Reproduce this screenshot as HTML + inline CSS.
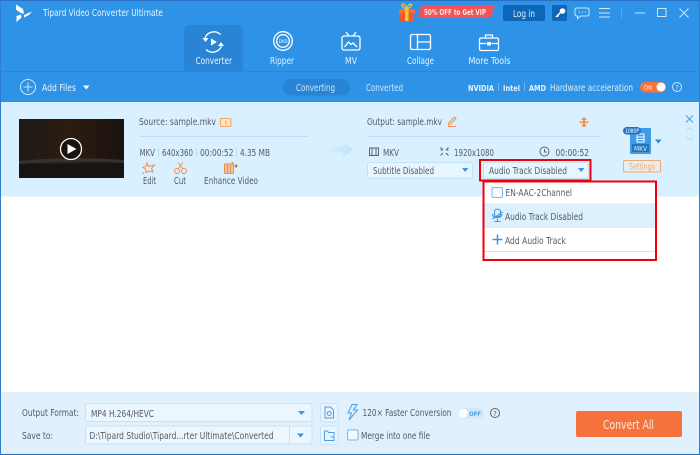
<!DOCTYPE html>
<html><head><meta charset="utf-8"><style>
html,body{margin:0;padding:0;background:#fff;width:700px;height:455px;overflow:hidden}
svg{display:block}
text{font-family:"DejaVu Sans","Liberation Sans",sans-serif;font-size:9.6px;fill:#555b66}
.w{fill:#e6f3fd}
.b{font-weight:bold}
.ln{fill:none;stroke:#fff;stroke-width:1.3}
.o{fill:none;stroke:#f58f4a;stroke-width:1}
.d{fill:none;stroke:#5a6470;stroke-width:1}
.bl{fill:none;stroke:#4a9fe6;stroke-width:1}
</style></head><body>
<svg width="700" height="455" viewBox="0 0 700 455" xmlns="http://www.w3.org/2000/svg">
<rect width="700" height="455" fill="#fff"/>
<rect width="700" height="102" fill="#2e93e6"/>
<rect width="700" height="1" fill="#2a6fc4"/>
<rect y="71" width="700" height="1.4" fill="#2a86d8"/>
<path d="M184 71V31a6 6 0 0 1 6-6h47a6 6 0 0 1 6 6v40z" fill="#2a84d6"/>
<!-- logo -->
<path d="M16 4.500l7 4.500 1 5-4-1.500-4-3zM24 15l8-3.500-3 3.500-5 2.500zM21 14.500l.5 3-5 4.500v-6z" fill="#fff"/>
<text class="w" x="43" y="16" textLength="120" lengthAdjust="spacingAndGlyphs">Tipard Video Converter Ultimate</text>
<!-- nav icons -->
<g class="ln">
<path d="M205 38a9.500 9.500 0 0 1 15.500-3.500M221.500 46a9.500 9.500 0 0 1-15.500 3.500"/>
<circle cx="283" cy="41" r="9.300"/><circle cx="283" cy="41" r="6.300"/>
<rect x="342" y="36" width="18" height="14" rx="2"/>
<path d="M346 32l3 4M356 32l-3 4M344.500 47l4-5 2.500 2.500 2-1.500 4 4"/>
<rect x="410.500" y="34.500" width="20" height="15" rx="1.500"/>
<path d="M417.500 34.500v15M417.500 42h13"/>
<rect x="479.500" y="38" width="19" height="12.500" rx="1.500"/>
<path d="M485.500 38v-3h7v3M479.500 43.500h7M491.500 43.500h7"/>
</g>
<path d="M202.500 38h6l-3 4zM224 46h-6l3-4z" fill="#fff"/>
<path d="M211 38.500l6 3.500-6 3.500z" fill="#fff"/>
<rect x="487" y="42" width="4" height="3.500" fill="#fff"/>
<text x="283" y="43" text-anchor="middle" style="font-size:4px;fill:#fff">DVD</text>
<text class="w" x="195.500" y="64" textLength="36.500" lengthAdjust="spacingAndGlyphs">Converter</text>
<text class="w" x="270" y="64" textLength="24" lengthAdjust="spacingAndGlyphs">Ripper</text>
<text class="w" x="345" y="64" textLength="12" lengthAdjust="spacingAndGlyphs">MV</text>
<text class="w" x="407" y="64" textLength="27" lengthAdjust="spacingAndGlyphs">Collage</text>
<text class="w" x="468.500" y="64" textLength="42" lengthAdjust="spacingAndGlyphs">More Tools</text>
<!-- top right -->
<rect x="400" y="10" width="14" height="11" fill="#ee5a2e"/>
<rect x="399" y="9" width="16" height="4" fill="#f4703a"/>
<rect x="405" y="9" width="3.500" height="12" fill="#f9c433"/>
<path d="M406.500 9c-4-1-6-5-3.500-5 2 0 3 3 3.500 5 .5-2 2-5 4.500-5 2 0-.5 4-4.500 5z" fill="none" stroke="#f9c433" stroke-width="1.200"/>
<path d="M421 5.500h74l-4 12.500h-73z" fill="#f2535a"/>
<text class="b" x="424" y="15" textLength="62" lengthAdjust="spacingAndGlyphs" style="font-size:8px;fill:#ffe3d5">50% OFF to Get VIP</text>
<rect x="503" y="5" width="42" height="16" rx="2" fill="#0e66b8"/>
<text class="w" x="513" y="17" textLength="22" lengthAdjust="spacingAndGlyphs" style="font-size:10px">Log in</text>
<rect x="552" y="5" width="15" height="16" rx="2" fill="#0e66b8"/>
<circle cx="562.500" cy="11" r="2.800" fill="#fff"/>
<path d="M561 12l-5 5M557 15l1.500 1.500" stroke="#fff" stroke-width="1.500" fill="none"/>
<path d="M576.500 8h11a1.500 1.500 0 0 1 1.500 1.500v5a1.500 1.500 0 0 1-1.500 1.500h-7l-3 2.500v-2.500h-1a1.500 1.500 0 0 1-1.500-1.500v-5a1.500 1.500 0 0 1 1.500-1.500z" fill="none" stroke="#cfe6fa" stroke-width="1"/>
<path d="M579 12h1M582 12h1M585 12h1" stroke="#cfe6fa"/>
<path d="M599 8.500h11M599 13h11M599 17h11" stroke="#cfe6fa" stroke-width="1"/>
<rect x="621" y="8" width="1" height="10" fill="#58a8ea"/>
<rect x="635" y="12.500" width="10" height="1" fill="#cfe6fa"/>
<rect x="657.500" y="8.500" width="8.500" height="8" fill="none" stroke="#cfe6fa"/>
<path d="M679.500 8.500l9 9M688.500 8.500l-9 9" stroke="#cfe6fa"/>
<!-- toolbar -->
<circle cx="28" cy="87" r="7.500" fill="none" stroke="#cfe6fa"/>
<path d="M28 82.500v9M23.500 87h9" stroke="#cfe6fa"/>
<text class="w" x="42" y="91" textLength="34" lengthAdjust="spacingAndGlyphs">Add Files</text>
<path d="M83 85.500h6.500l-3.250 4z" fill="#fff"/>
<rect x="283" y="79" width="67" height="16.500" rx="8" fill="#2a84d6"/>
<text x="296" y="91" textLength="39" lengthAdjust="spacingAndGlyphs" style="fill:#cfe6fa">Converting</text>
<text x="366" y="91" textLength="37" lengthAdjust="spacingAndGlyphs" style="fill:#cfe6fa">Converted</text>
<text class="b" x="468" y="91" textLength="26" lengthAdjust="spacingAndGlyphs" style="fill:#e6f3fd;font-size:8px">NVIDIA</text>
<text class="b" x="503" y="91" textLength="17" lengthAdjust="spacingAndGlyphs" style="fill:#e6f3fd;font-size:8px">Intel</text>
<text class="b" x="529" y="91" textLength="17" lengthAdjust="spacingAndGlyphs" style="fill:#e6f3fd;font-size:8px">AMD</text>
<rect x="498" y="83" width=".8" height="8" fill="#7fbff0"/><rect x="524" y="83" width=".8" height="8" fill="#7fbff0"/>
<text x="550" y="91" textLength="83" lengthAdjust="spacingAndGlyphs" style="fill:#dcedfb">Hardware acceleration</text>
<rect x="640" y="82" width="26" height="10.500" rx="5.250" fill="#f5743c"/>
<text x="644" y="90" textLength="8" lengthAdjust="spacingAndGlyphs" style="font-size:7px;fill:#ffe3d5">ON</text>
<circle cx="661" cy="87" r="4.500" fill="#fff"/>
<circle cx="677" cy="87" r="4.500" fill="none" stroke="#cfe6fa"/>
<text x="677" y="90" text-anchor="middle" style="font-size:7px;fill:#cfe6fa">?</text>
<!-- row -->
<rect x="1" y="102" width="698" height="94.500" fill="#d8f0ff"/>
<defs><linearGradient id="th" x1="0" x2="1"><stop offset="0" stop-color="#1e1a16"/><stop offset=".5" stop-color="#2e1c10"/><stop offset="1" stop-color="#17120e"/></linearGradient>
<linearGradient id="ag" x1="0" x2="1"><stop offset="0" stop-color="#d8f0ff"/><stop offset="1" stop-color="#bfe2fa"/></linearGradient></defs>
<rect x="19" y="119" width="105" height="59" fill="url(#th)"/>
<path d="M19 161c30-3 70-4 105-1v3c-35-2-75-1-105 1z" fill="#35322e"/>
<rect x="19" y="164" width="105" height="14" fill="#171411"/>
<circle cx="71" cy="149" r="10.500" fill="#1b130d" stroke="#fff" stroke-width="1.300"/>
<path d="M67.500 144l9 5-9 5z" fill="#fff"/>
<text x="139" y="125" textLength="77" lengthAdjust="spacingAndGlyphs">Source: sample.mkv</text>
<rect x="220.500" y="118.500" width="10.500" height="8" rx="1" fill="#fbe6cf" stroke="#f5a25e"/>
<rect x="225.300" y="120.500" width="1" height="4" fill="#f58f4a"/>
<rect x="139" y="136" width="169" height="1" fill="#b9e1fa"/>
<text x="139.500" y="156" textLength="15.500" lengthAdjust="spacingAndGlyphs">MKV</text>
<text x="162" y="156" textLength="31" lengthAdjust="spacingAndGlyphs">640x360</text>
<text x="200" y="156" textLength="33.500" lengthAdjust="spacingAndGlyphs">00:00:52</text>
<text x="240" y="156" textLength="30" lengthAdjust="spacingAndGlyphs">4.35 MB</text>
<rect x="158" y="148" width=".8" height="9" fill="#b9d8ee"/><rect x="196" y="148" width=".8" height="9" fill="#b9d8ee"/><rect x="236" y="148" width=".8" height="9" fill="#b9d8ee"/>
<path class="o" d="M147 163l1.500 3.500 6-1.500-3 3.500 1.500 3.500-4-1-3 1.500-.5-3.500-2.500-1.500 3-1zM144 172.500l-1.500 1.500"/>
<g class="o"><circle cx="177" cy="171" r="2.500"/><circle cx="184" cy="171" r="2.500"/><path d="M178 169l5-6.500M183 169l-5-6.500"/></g>
<g class="o"><rect x="224.500" y="164" width="9" height="9.500"/><path d="M227.500 164v9.500M230.500 164v9.500"/></g>
<rect x="224" y="164" width="10" height="10" fill="#f58f4a" opacity=".45"/>
<circle cx="236" cy="166" r="1.500" fill="#f2603a"/><circle cx="232.500" cy="163" r="1" fill="#f58f4a"/>
<text x="143" y="184" textLength="13" lengthAdjust="spacingAndGlyphs">Edit</text>
<text x="174" y="184" textLength="12" lengthAdjust="spacingAndGlyphs">Cut</text>
<text x="204" y="184" textLength="54" lengthAdjust="spacingAndGlyphs">Enhance Video</text>
<path d="M328 146.500h15v-5l10 8-10 8v-5h-15z" fill="url(#ag)"/>
<text x="367" y="125" textLength="75" lengthAdjust="spacingAndGlyphs">Output: sample.mkv</text>
<path class="o" d="M448 126.500h8M448.500 125l.5-2.500 5.500-5.500 1.500 1.500-5.500 5.500z"/>
<path d="M584 117l3 3h-2v1.500h3.500v1.500h-3.500v1.500h2l-3 3-3-3h2v-1.500h-3.500v-1.500h3.500v-1.500h-2z" fill="#f58f4a"/>
<rect x="367" y="136" width="233" height="1" fill="#b9e1fa"/>
<g class="d"><rect x="369.500" y="148" width="9" height="7.500"/><path d="M372 148v7.500M376 148v7.500"/></g>
<text x="383" y="156" textLength="16" lengthAdjust="spacingAndGlyphs">MKV</text>
<path class="d" d="M440.500 150h2M446.500 150h2M440.500 147.500l2.500 2.500M448.500 147.500l-2.500 2.500M440.500 155.500l2.500-2.500M448.500 155.500l-2.500-2.500"/>
<text x="454" y="156" textLength="40" lengthAdjust="spacingAndGlyphs">1920x1080</text>
<circle class="d" cx="544.500" cy="151.500" r="4.500"/><path class="d" d="M544.500 149v3h2.500"/>
<text x="555.500" y="156" textLength="33.500" lengthAdjust="spacingAndGlyphs">00:00:52</text>
<rect x="367.500" y="162.500" width="105" height="16" rx="2" fill="#e6f5fe" stroke="#c3e3f9"/>
<text x="373" y="174" textLength="61" lengthAdjust="spacingAndGlyphs">Subtitle Disabled</text>
<path d="M462 168h6.500l-3.250 4z" fill="#3a97e0"/>
<rect x="483.500" y="162.500" width="105" height="16" rx="2" fill="#e6f5fe" stroke="#c3e3f9"/>
<text x="489" y="174" textLength="78" lengthAdjust="spacingAndGlyphs">Audio Track Disabled</text>
<path d="M578 168h6.500l-3.250 4z" fill="#3a97e0"/>
<!-- format -->
<rect x="630" y="128" width="21" height="26" rx="1" fill="#3f9be3"/>
<rect x="632" y="144" width="17" height="8" rx="1" fill="#1f74c0"/>
<text x="640.500" y="151" text-anchor="middle" textLength="13" lengthAdjust="spacingAndGlyphs" style="font-size:7px;fill:#d8f0ff">MKV</text>
<rect x="637" y="134" width="7" height="8" fill="none" stroke="#fff"/><path d="M637 137h7M637 139.500h7" stroke="#fff"/>
<rect x="623" y="127" width="18" height="7.500" rx="3.750" fill="#1f74c0"/>
<text x="632" y="133" text-anchor="middle" textLength="14" lengthAdjust="spacingAndGlyphs" style="font-size:6.500px;fill:#fff">1080P</text>
<path d="M655 139.500h6.500l-3.250 4z" fill="#2e86d2"/>
<rect x="623.500" y="160.500" width="37" height="11.500" rx="1.500" fill="#e3eff2" stroke="#f5a870"/>
<text x="629" y="169.500" textLength="26" lengthAdjust="spacingAndGlyphs" style="font-size:8.500px;fill:#f5a870">Settings</text>
<path d="M686 115.500l7 7M693 115.500l-7 7" stroke="#4a9fe6"/>
<path d="M686.500 131l3.500-3.500 3.500 3.500M686.500 136.500l3.500 3.500 3.500-3.500" fill="none" stroke="#bcdff6"/>
<!-- dropdown -->
<rect x="484" y="182" width="171" height="70" fill="#fff"/>
<rect x="484" y="204" width="171" height="24" fill="#dcf0fd"/>
<rect x="484" y="203.500" width="171" height="1" fill="#d8ecf9"/>
<rect x="484" y="251" width="171" height="1" fill="#cfe5f5"/>
<rect x="492" y="187.500" width="10.500" height="10" rx="1.500" fill="#f5fbff" stroke="#7db8e8"/>
<text x="505.500" y="196" textLength="66.500" lengthAdjust="spacingAndGlyphs">EN-AAC-2Channel</text>
<path d="M494.500 211.500c0-3 6-3 6 0v3c0 3-6 3-6 0zM492.500 214c0 5 9.500 5 9.500 0M497.500 219v2.500M494.500 221.500h6M492.500 219l10-7" fill="none" stroke="#3a97e0" stroke-width="1.100"/>
<text x="505" y="220" textLength="78" lengthAdjust="spacingAndGlyphs">Audio Track Disabled</text>
<path d="M497.500 234.500v10M492.500 239.500h10" stroke="#3a97e0" stroke-width="1.500"/>
<text x="505" y="244" textLength="61" lengthAdjust="spacingAndGlyphs">Add Audio Track</text>
<!-- red boxes -->
<rect x="480" y="160" width="110.500" height="20.500" fill="none" stroke="#f0000a" stroke-width="2"/>
<rect x="483.500" y="181.500" width="172.500" height="78.500" fill="none" stroke="#f0000a" stroke-width="2"/>
<!-- bottom -->
<rect x="1" y="393" width="698" height="61" fill="#e1f0fd"/>
<rect x="1" y="392.500" width="698" height="1" fill="#d3e7f7"/>
<rect y="454" width="700" height="1" fill="#2a6cb0"/>
<text x="22" y="416" textLength="57" lengthAdjust="spacingAndGlyphs">Output Format:</text>
<rect x="85.500" y="403.500" width="226.500" height="18" rx="1.500" fill="#ebf6fe" stroke="#c6e2f8"/>
<text x="91" y="417" textLength="63" lengthAdjust="spacingAndGlyphs">MP4 H.264/HEVC</text>
<path d="M298 411h7l-3.500 4z" fill="#3a97e0"/>
<text x="22" y="439" textLength="31" lengthAdjust="spacingAndGlyphs">Save to:</text>
<rect x="85.500" y="426" width="226.500" height="18" rx="1.500" fill="#ebf6fe" stroke="#c6e2f8"/>
<rect x="289" y="426" width="1" height="18" fill="#c6e2f8"/>
<text x="89.500" y="439" textLength="184" lengthAdjust="spacingAndGlyphs">D:\Tipard Studio\Tipard...rter Ultimate\Converted</text>
<path d="M297 433.500h7l-3.500 4z" fill="#3a97e0"/>
<rect x="320.500" y="403.500" width="17.500" height="18.500" rx="2" fill="#e8f4fe" stroke="#c6e2f8"/>
<path class="bl" d="M325 407h5.500l3 3v8h-8.500z"/><circle class="bl" cx="329.300" cy="413.500" r="2"/>
<rect x="320.500" y="426" width="17.500" height="18.500" rx="2" fill="#e8f4fe" stroke="#c6e2f8"/>
<path class="bl" d="M324.500 431h3l1 1.500h5.500v8h-9.500zM330.500 437h3"/>
<path class="bl" d="M352 404.500h5l-3.500 5.500h4l-8.500 10 2.500-7h-3.500z"/>
<text x="362.500" y="416" textLength="89" lengthAdjust="spacingAndGlyphs">120× Faster Conversion</text>
<rect x="458" y="408" width="26" height="10.500" rx="5.250" fill="#d0e8fb"/>
<circle cx="463" cy="413.200" r="4.500" fill="#fff"/>
<text x="469" y="416" textLength="12" lengthAdjust="spacingAndGlyphs" style="font-size:6.500px;fill:#4a9fe6;font-weight:bold">OFF</text>
<circle cx="495" cy="413" r="4.500" fill="none" stroke="#666"/>
<text x="495" y="416" text-anchor="middle" style="font-size:7px;fill:#555">?</text>
<rect x="347.500" y="430" width="10.500" height="10" rx="1.500" fill="#f2f9ff" stroke="#7db8e8"/>
<text x="361" y="439" textLength="69" lengthAdjust="spacingAndGlyphs">Merge into one file</text>
<rect x="576" y="411" width="106" height="26" rx="2" fill="#f5723d"/>
<text x="603" y="429" textLength="51" lengthAdjust="spacingAndGlyphs" style="font-size:12px;fill:#ffe8dc">Convert All</text>
<!-- side borders -->
<rect x="0" y="0" width="1" height="455" fill="#2f7fd0"/>
<rect x="699" y="0" width="1" height="455" fill="#2f7fd0"/>
</svg>
</body></html>
